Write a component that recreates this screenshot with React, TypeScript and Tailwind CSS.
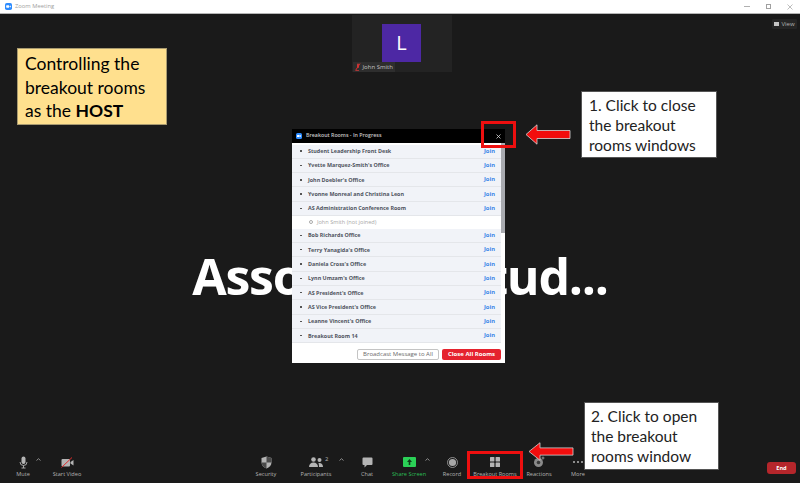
const ROOMS_TOP = [
  'Student Leadership Front Desk',
  "Yvette Marquez-Smith's Office",
  "John Doebler's Office",
  'Yvonne Monreal and Christina Leon',
  'AS Administration Conference Room',
];

const ROOMS_BOTTOM = [
  'Bob Richards Office',
  "Terry Yanagida's Office",
  "Daniela Cross's Office",
  "Lynn Umzam's Office",
  "AS President's Office",
  "AS Vice President's Office",
  "Leanne Vincent's Office",
  'Breakout Room 14',
];

function ZoomLogo({ size }: { size: number }) {
  return (
    <svg width={size} height={size} viewBox="0 0 12 12" className="shrink-0">
      <rect width="12" height="12" rx="3" fill="#2d8cff" />
      <rect x="2" y="4" width="5.2" height="4" rx="1" fill="#fff" />
      <path d="M7.8 5.6 10 4.2v3.6L7.8 6.4z" fill="#fff" />
    </svg>
  );
}

function Caret({ className }: { className: string }) {
  return (
    <div className={`flex justify-center pb-[8px] ${className}`}>
      <svg width="5" height="3" viewBox="0 0 5 3">
        <path d="M0.5 2.5 2.5 0.7 4.5 2.5" fill="none" stroke="#a8a8a8" strokeWidth="0.8" />
      </svg>
    </div>
  );
}

function ToolItem({ label, className, green, children }: { label: string; className: string; green?: boolean; children: React.ReactNode }) {
  return (
    <div className={`flex flex-col items-center ${className}`}>
      <div className="h-[14px] flex items-center justify-center">{children}</div>
      <span className={`mt-[1px] text-[5.6px] leading-[8px] whitespace-nowrap ${green ? 'text-[#2bbd55]' : 'text-[#b4b4b4]'}`}>{label}</span>
    </div>
  );
}

function RoomRow({ name }: { name: string }) {
  return (
    <div className="h-[14.33px] flex items-center bg-[#f1f3f8] border-b border-[#e4e6ea] mr-[4px]">
      <span className="ml-[8px] w-[2px] h-[1.5px] bg-[#555]" />
      <span className="ml-[6px] flex-1 text-[5.4px] font-bold text-[#4f545e] whitespace-nowrap">{name}</span>
      <span className="mr-[6px] text-[5.8px] font-bold text-[#3a86e8]">Join</span>
    </div>
  );
}

function Arrow({ className }: { className: string }) {
  return (
    <svg viewBox="0 0 46 21" preserveAspectRatio="none" className={`absolute ${className}`}>
      <path d="M1 10.500 12 0.800v5.700h33v8H12v5.700z" fill="#f20d0d" stroke="#d8d8d8" strokeWidth="0.8" />
    </svg>
  );
}

export default function App() {
  return (
    <div className="relative w-[800px] h-[483px] overflow-hidden flex flex-col bg-[#1a1a1a] font-['Open_Sans',sans-serif]">
      {/* Title bar */}
      <div className="h-[14px] shrink-0 bg-white border-b border-[#b5b5b5] flex items-center pl-[5px]">
        <ZoomLogo size={7} />
        <span className="ml-[3px] text-[5.8px] text-[#a0a0a0]">Zoom Meeting</span>
        <div className="ml-auto flex items-center gap-[16px] pr-[7px]">
          <span className="w-[6px] h-px bg-[#b0b0b0]" />
          <span className="w-[5px] h-[5px] border border-[#a0a0a0]" />
          <svg width="6" height="6" viewBox="0 0 6 6">
            <path d="M0.5 0.5 5.5 5.5M5.5 0.5 0.5 5.5" stroke="#a0a0a0" strokeWidth="0.7" />
          </svg>
        </div>
      </div>

      {/* Meeting area */}
      <div className="relative flex-1 flex flex-col items-center">
        <div className="mt-px ml-[3px] w-[100px] h-[57px] bg-[#232323] flex flex-col items-center relative">
          <div className="mt-[9px] w-[39px] h-[38px] bg-[#4d28a4] flex items-center justify-center">
            <span className="text-[20px] leading-none text-white">L</span>
          </div>
          <div className="absolute left-[1px] bottom-0 h-[10px] w-[42px] bg-[#2e2e2e] flex items-center pl-[1px]">
            <svg width="7" height="8" viewBox="0 0 7 8" className="shrink-0">
              <rect x="3" y="0.5" width="2" height="4.5" rx="1" fill="#c43b3b" />
              <path d="M1.5 7.5 6 0.5" stroke="#e02b2b" strokeWidth="1" />
              <path d="M2 7.5h3" stroke="#c43b3b" strokeWidth="0.8" />
            </svg>
            <span className="ml-[2px] text-[6px] text-[#c4c4c4] whitespace-nowrap">John Smith</span>
          </div>
        </div>
        <div className="absolute right-[3px] top-[5px] w-[25px] h-[10px] rounded-[1px] bg-[#252525] flex items-center justify-center gap-[2px]">
          <span className="w-[5px] h-[4px] bg-[#c4c4c4]" />
          <span className="text-[6px] text-[#b4b4b4]">View</span>
        </div>
        <div className="mt-[169px] text-[50px] leading-[70px] tracking-[-1.3px] font-bold text-white whitespace-nowrap">Associated Stud...</div>
      </div>

      {/* Toolbar */}
      <div className="h-[28px] shrink-0 flex items-start">
        <ToolItem label="Mute" className="ml-[13px] w-[20px]">
          <svg width="9" height="13" viewBox="0 0 9 13">
            <rect x="2.5" y="0.5" width="4" height="7.5" rx="2" fill="#b4b4b4" />
            <path d="M1 6a3.5 3.5 0 0 0 7 0M4.5 9.5V12M2.5 12h4" fill="none" stroke="#b4b4b4" strokeWidth="0.9" />
          </svg>
        </ToolItem>
        <Caret className="w-[10px] mt-[3px]" />
        <ToolItem label="Start Video" className="w-[48px]">
          <svg width="13" height="11" viewBox="0 0 13 11">
            <rect x="0.5" y="2" width="8.5" height="7.5" rx="1" fill="#b4b4b4" />
            <path d="M9.5 5 12.5 3v5.5l-3-2z" fill="#b4b4b4" />
            <path d="M0.5 10.5 11 0.5" stroke="#e02b2b" strokeWidth="1" />
          </svg>
        </ToolItem>
        <ToolItem label="Security" className="ml-[160px] w-[30px]">
          <svg width="11" height="13" viewBox="0 0 11 13">
            <path d="M5.5 0.5 10.5 2v4.5c0 3-2.2 5-5 6-2.800-1-5-3-5-6V2z" fill="#b4b4b4" />
            <path d="M5.5 0.5V6.500H10.500V2zM5.500 6.500V12.500C3 11.500 0.700 9.500 0.500 6.500z" fill="#4a4a4a" />
          </svg>
        </ToolItem>
        <ToolItem label="Participants" className="ml-[15px] w-[40px]">
          <div className="relative flex">
            <svg width="14" height="10" viewBox="0 0 14 10">
              <circle cx="4.500" cy="2.500" r="2.300" fill="#b4b4b4" />
              <path d="M0 10c0-3 2-4.500 4.500-4.500S9 7 9 10z" fill="#b4b4b4" />
              <circle cx="10.500" cy="3" r="2" fill="#b4b4b4" />
              <path d="M9.500 6c2.500-.5 4.500 1 4.500 4h-4c0-1.500-.2-3-.5-4z" fill="#b4b4b4" />
            </svg>
            <span className="absolute left-[16px] top-[-2px] text-[6px] text-[#b4b4b4]">2</span>
          </div>
        </ToolItem>
        <Caret className="w-[10px] mt-[3px]" />
        <ToolItem label="Chat" className="ml-[6px] w-[30px]">
          <svg width="11" height="11" viewBox="0 0 11 11">
            <path d="M1.500 0.500h8a1 1 0 0 1 1 1v5.500a1 1 0 0 1-1 1H5L2.500 10.500V8h-1a1 1 0 0 1-1-1V1.500a1 1 0 0 1 1-1z" fill="#b4b4b4" />
          </svg>
        </ToolItem>
        <ToolItem label="Share Screen" green className="ml-[13px] w-[28px]">
          <svg width="13" height="10" viewBox="0 0 13 10">
            <rect width="13" height="10" rx="1" fill="#2bd157" />
            <path d="M6.500 2 9 5H7.300v3H5.700V5H4z" fill="#0e3d1a" />
          </svg>
        </ToolItem>
        <Caret className="w-[8px] mt-[3px]" />
        <ToolItem label="Record" className="ml-[11px] w-[20px]">
          <svg width="11" height="11" viewBox="0 0 11 11">
            <circle cx="5.500" cy="5.500" r="5" fill="none" stroke="#a8a8a8" strokeWidth="0.8" />
            <circle cx="5.500" cy="5.500" r="3.600" fill="#a8a8a8" />
          </svg>
        </ToolItem>
        <ToolItem label="Breakout Rooms" className="ml-[13px] w-[40px]">
          <svg width="10" height="10" viewBox="0 0 10 10">
            <rect width="4.400" height="4.400" rx="0.500" fill="#b4b4b4" />
            <rect x="5.600" width="4.400" height="4.400" rx="0.500" fill="#b4b4b4" />
            <rect y="5.600" width="4.400" height="4.400" rx="0.500" fill="#b4b4b4" />
            <rect x="5.600" y="5.600" width="4.400" height="4.400" rx="0.500" fill="#b4b4b4" />
          </svg>
        </ToolItem>
        <ToolItem label="Reactions" className="ml-[9px] w-[30px]">
          <svg width="12" height="12" viewBox="0 0 12 12">
            <circle cx="5.500" cy="6.500" r="4.500" fill="#8a8a8a" />
            <circle cx="5.500" cy="6.500" r="1.800" fill="#3a3a3a" />
            <path d="M10 0.500v3M8.500 2h3" stroke="#b4b4b4" strokeWidth="0.7" />
          </svg>
        </ToolItem>
        <ToolItem label="More" className="ml-[9px] w-[30px]">
          <div className="flex gap-[2px]">
            <span className="w-[2px] h-[2px] rounded-full bg-[#b4b4b4]" />
            <span className="w-[2px] h-[2px] rounded-full bg-[#b4b4b4]" />
            <span className="w-[2px] h-[2px] rounded-full bg-[#b4b4b4]" />
          </div>
        </ToolItem>
        <div className="ml-auto mr-[4px] mt-[7px] w-[29px] h-[12px] rounded-[3px] bg-[#b5262b] flex items-center justify-center">
          <span className="text-[5.6px] font-bold text-white">End</span>
        </div>
      </div>

      {/* Breakout rooms dialog */}
      <div className="absolute left-[292px] top-[129px] w-[213px] h-[234px] bg-white flex flex-col">
        <div className="h-[14px] shrink-0 bg-black flex items-center pl-[4px]">
          <ZoomLogo size={6} />
          <span className="ml-[4px] text-[5.3px] font-semibold text-[#c8c8c8]">Breakout Rooms - In Progress</span>
          <svg width="5" height="5" viewBox="0 0 5 5" className="ml-auto mr-[4px]">
            <path d="M0.500 0.500 4.500 4.500M4.500 0.500 0.500 4.500" stroke="#d8d8d8" strokeWidth="0.8" />
          </svg>
        </div>
        <div className="relative h-[200px] shrink-0 pt-[1.5px]">
          <div className="absolute right-0 top-0 w-[4px] h-[90px] bg-[#a9abb0]" />
          {ROOMS_TOP.map((room) => (
            <RoomRow key={room} name={room} />
          ))}
          <div className="h-[12.500px] flex items-center pl-[17px] mr-[4px] bg-white">
            <span className="w-[4px] h-[4px] rounded-full border border-[#aaa]" />
            <span className="ml-[4px] text-[5.600px] text-[#a8a8a8] whitespace-nowrap">John Smith (not joined)</span>
          </div>
          {ROOMS_BOTTOM.map((room) => (
            <RoomRow key={room} name={room} />
          ))}
        </div>
        <div className="flex-1 flex items-start justify-end gap-[3px] pt-[6px] pr-[4px]">
          <div className="w-[82px] h-[11px] rounded-[2px] border border-[#c4c4c4] flex items-center justify-center">
            <span className="text-[6px] text-[#6a6a6a] whitespace-nowrap">Broadcast Message to All</span>
          </div>
          <div className="w-[59px] h-[11px] rounded-[2px] bg-[#e5232e] flex items-center justify-center">
            <span className="text-[6px] font-bold text-white whitespace-nowrap">Close All Rooms</span>
          </div>
        </div>
      </div>

      {/* Annotations */}
      <div className="absolute left-[17px] top-[48px] w-[150px] h-[77px] bg-[#ffe08e] border border-[#a89a70] pl-[7px] pt-[3px] font-['Lato',sans-serif] text-[17.500px] leading-[23.500px] text-black">
        <div>Controlling the</div>
        <div>breakout rooms</div>
        <div>as the <b>HOST</b></div>
      </div>
      <div className="absolute left-[581px] top-[91px] w-[136px] h-[67px] bg-white border border-[#555] pl-[7px] pt-[3px] font-['Lato',sans-serif] text-[15.500px] leading-[20px] text-[#222]">
        <div>1. Click to close</div>
        <div>the breakout</div>
        <div>rooms windows</div>
      </div>
      <div className="absolute left-[584px] top-[402px] w-[135px] h-[68px] bg-white border border-[#555] pl-[6px] pt-[3px] font-['Lato',sans-serif] text-[15.500px] leading-[20px] text-[#222]">
        <div>2. Click to open</div>
        <div>the breakout</div>
        <div>rooms window</div>
      </div>
      <div className="absolute left-[481px] top-[121px] w-[35px] h-[27px] border-[3px] border-[#ee0f0f]" />
      <div className="absolute left-[467px] top-[451px] w-[56px] h-[28px] border-[3px] border-[#ee0f0f]" />
      <Arrow className="left-[525px] top-[124px] w-[46px] h-[21px]" />
      <Arrow className="left-[528px] top-[442px] w-[46px] h-[19px]" />
    </div>
  );
}
